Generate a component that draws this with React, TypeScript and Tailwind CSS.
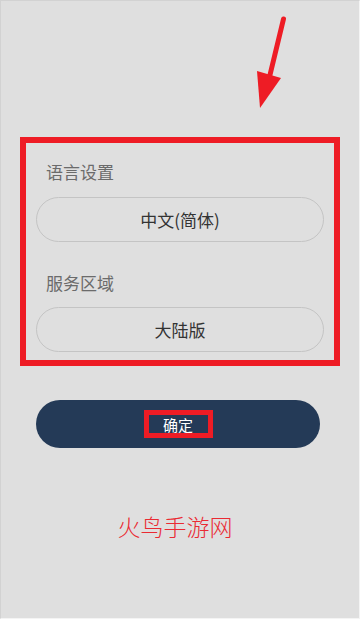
import React from "react";

export default function App() {
  return (
    <div
      className="relative w-[360px] h-[619px] bg-[#dfdfdf] border-l border-t border-l-[#d2d2d2] border-t-[#d2d2d2] border-r border-b border-r-[#f4f4f4] border-b-[#f4f4f4] overflow-hidden flex flex-col"
      style={{ fontFamily: '"Noto Sans CJK SC", "Noto Sans", sans-serif' }}
    >
      <svg className="absolute left-0 top-0" width="360" height="120" viewBox="0 0 360 120">
        <line x1="282.5" y1="18" x2="268" y2="78" stroke="#ee1c25" strokeWidth="5" strokeLinecap="round" />
        <polygon points="256,70 280,77 259,107" fill="#ee1c25" />
      </svg>

      <div className="mt-[136px] ml-[19px] w-[320px] border-[6px] border-[#ee1c25] px-[10px] pt-[17px] pb-[8px] flex flex-col">
        <div className="ml-[10px] text-[17px] leading-[24px] text-[#6b6b6b]">语言设置</div>
        <div className="mt-[13px] h-[45px] rounded-full border border-[#c4c4c4] flex items-center justify-center text-[17px] text-[#333]">
          中文(简体)
        </div>
        <div className="mt-[29px] ml-[10px] text-[17px] leading-[24px] text-[#6b6b6b]">服务区域</div>
        <div className="mt-[12px] h-[45px] rounded-full border border-[#c4c4c4] flex items-center justify-center text-[17px] text-[#333]">
          大陆版
        </div>
      </div>

      <div className="mt-[34px] ml-[35px] w-[284px] h-[48px] rounded-full bg-[#243a57] flex items-center justify-center">
        <div className="w-[69px] h-[28px] border-[5px] border-[#ee1c25] flex items-center justify-center text-white text-[15px] leading-none">
          确定
        </div>
      </div>

      <div className="mt-[62px] ml-[35px] w-[278px] text-center text-[23px] leading-[32px] text-[#ea2a33] font-light">
        火鸟手游网
      </div>
    </div>
  );
}
